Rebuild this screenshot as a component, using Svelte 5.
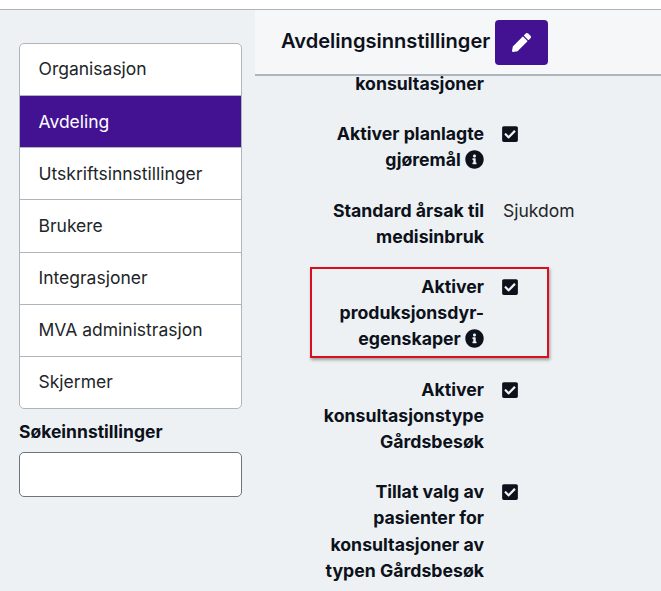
<script>
	const menu = [
		"Organisasjon",
		"Avdeling",
		"Utskriftsinnstillinger",
		"Brukere",
		"Integrasjoner",
		"MVA administrasjon",
		"Skjermer"
	];
	const settings = [
		{ label: "konsultasjoner" },
		{ label: "Aktiver planlagte gjøremål", checked: true, info: true },
		{ label: "Standard årsak til medisinbruk", value: "Sjukdom" },
		{ label: "Aktiver produksjonsdyr-egenskaper", checked: true, info: true, marked: true },
		{ label: "Aktiver konsultasjonstype Gårdsbesøk", checked: true },
		{ label: "Tillat valg av pasienter for konsultasjoner av typen Gårdsbesøk", checked: true }
	];
</script>

<div class="page">
	<aside class="side">
		<ul class="menu">
			{#each menu as item}
				<li class:active={item === "Avdeling"}>{item}</li>
			{/each}
		</ul>
		<label class="search-label" for="search">Søkeinnstillinger</label>
		<input class="search" id="search" type="text" />
	</aside>
	<main class="main">
		<header class="head">
			<h1>Avdelingsinnstillinger</h1>
			<button class="edit" aria-label="Rediger">
				<svg viewBox="0 0 512 512" width="19" height="19">
					<path fill="currentColor" d="M497.9 142.1l-46.1 46.1c-4.7 4.7-12.3 4.7-17 0l-111-111c-4.7-4.7-4.7-12.3 0-17l46.1-46.1c18.7-18.7 49.1-18.7 67.9 0l60.1 60.1c18.8 18.7 18.8 49.1 0 67.9zM284.2 99.8L21.6 362.4.4 483.9c-2.9 16.4 11.4 30.6 27.8 27.8l121.5-21.3 262.6-262.6c4.7-4.7 4.7-12.3 0-17l-111-111c-4.8-4.7-12.4-4.7-17.1 0z" />
				</svg>
			</button>
		</header>
		<div class="rows">
			{#each settings as row}
				<div class="row" class:marked={row.marked}>
					<div class="label">
						{row.label}
						{#if row.info}
							<svg class="info" viewBox="0 0 512 512" width="19" height="19">
								<path fill="currentColor" d="M256 8C119.043 8 8 119.083 8 256c0 136.997 111.043 248 248 248s248-111.003 248-248C504 119.083 392.957 8 256 8zm0 110c23.196 0 42 18.804 42 42s-18.804 42-42 42-42-18.804-42-42 18.804-42 42-42zm56 254c0 6.627-5.373 12-12 12h-88c-6.627 0-12-5.373-12-12v-24c0-6.627 5.373-12 12-12h12v-64h-12c-6.627 0-12-5.373-12-12v-24c0-6.627 5.373-12 12-12h64c6.627 0 12 5.373 12 12v100h12c6.627 0 12 5.373 12 12v24z" />
							</svg>
						{/if}
					</div>
					<div class="value">
						{#if row.checked}
							<svg class="check" viewBox="0 0 448 512" width="16" height="18">
								<path fill="currentColor" d="M400 480H48c-26.51 0-48-21.49-48-48V80c0-26.51 21.49-48 48-48h352c26.51 0 48 21.49 48 48v352c0 26.51-21.49 48-48 48zm-204.686-98.059l184-184c6.248-6.248 6.248-16.379 0-22.627l-22.627-22.627c-6.248-6.248-16.379-6.249-22.628 0L184 302.745l-70.059-70.059c-6.248-6.248-16.379-6.248-22.628 0l-22.627 22.627c-6.248 6.248-6.248 16.379 0 22.627l104 104c6.249 6.25 16.379 6.25 22.628.001z" />
							</svg>
						{:else if row.value}
							{row.value}
						{/if}
					</div>
				</div>
			{/each}
		</div>
	</main>
</div>

<style>
	:global(body) {
		margin: 0;
		background: #fff;
	}
	.page {
		display: flex;
		height: 581px;
		margin-top: 9px;
		border-top: 1px solid #adb5bd;
		background: #eef1f3;
		font-family: Inter, "Liberation Sans", sans-serif;
		font-size: 17.5px;
		line-height: 26.25px;
		color: #0c111b;
		overflow: hidden;
	}
	.side {
		box-sizing: border-box;
		width: 255px;
		flex: none;
		padding: 33px 13px 0 19px;
	}
	.menu {
		list-style: none;
		margin: 0;
		padding: 0;
		background: #fff;
		border: 1px solid #adb5bd;
		border-radius: 5px;
		overflow: hidden;
	}
	.menu li {
		padding: 12.4px 18.5px 12.5px;
		border-bottom: 1px solid #adb5bd;
		color: #212529;
	}
	.menu li:last-child {
		border-bottom: 0;
	}
	.menu li.active {
		background: #431293;
		color: #fff;
	}
	.search-label {
		display: block;
		margin-top: 10px;
		font-weight: 700;
	}
	.search {
		display: block;
		box-sizing: border-box;
		width: 100%;
		height: 45px;
		margin-top: 7px;
		background: #fff;
		border: 1px solid #6c757d;
		border-radius: 5px;
	}
	.main {
		flex: 1;
		min-width: 0;
		display: flex;
		flex-direction: column;
	}
	.head {
		box-sizing: border-box;
		display: flex;
		align-items: center;
		gap: 5px;
		height: 66px;
		padding: 0 0 0 26px;
		background: #f5f7f8;
		border-bottom: 2px solid #adb5bd;
		flex: none;
	}
	h1 {
		margin: 0 0 2px;
		font-size: 20.1px;
		font-weight: 600;
		line-height: 26px;
	}
	.edit {
		display: flex;
		align-items: center;
		justify-content: center;
		width: 53px;
		height: 45px;
		padding: 0;
		border: 0;
		border-radius: 4px;
		background: #431293;
		color: #fff;
	}
	.rows {
		margin-top: -5px;
	}
	.row {
		position: relative;
		display: flex;
		gap: 19px;
		padding-bottom: 23.9px;
	}
	.row.marked::after {
		content: "";
		position: absolute;
		left: 55px;
		top: -7px;
		width: 235px;
		height: 87px;
		border: 2px solid #d7101e;
		box-shadow: 1px 2px 3px rgba(0, 0, 0, 0.35);
		pointer-events: none;
	}
	.label {
		box-sizing: border-box;
		width: 229px;
		padding-left: 63px;
		text-align: right;
		font-size: 17.7px;
		font-weight: 700;
	}
	.info {
		vertical-align: -3px;
		margin-left: 0;
	}
	.value {
		color: #212529;
	}
	.check {
		display: block;
		margin: 4px 0 0 -1px;
		color: #0c111b;
	}
</style>
